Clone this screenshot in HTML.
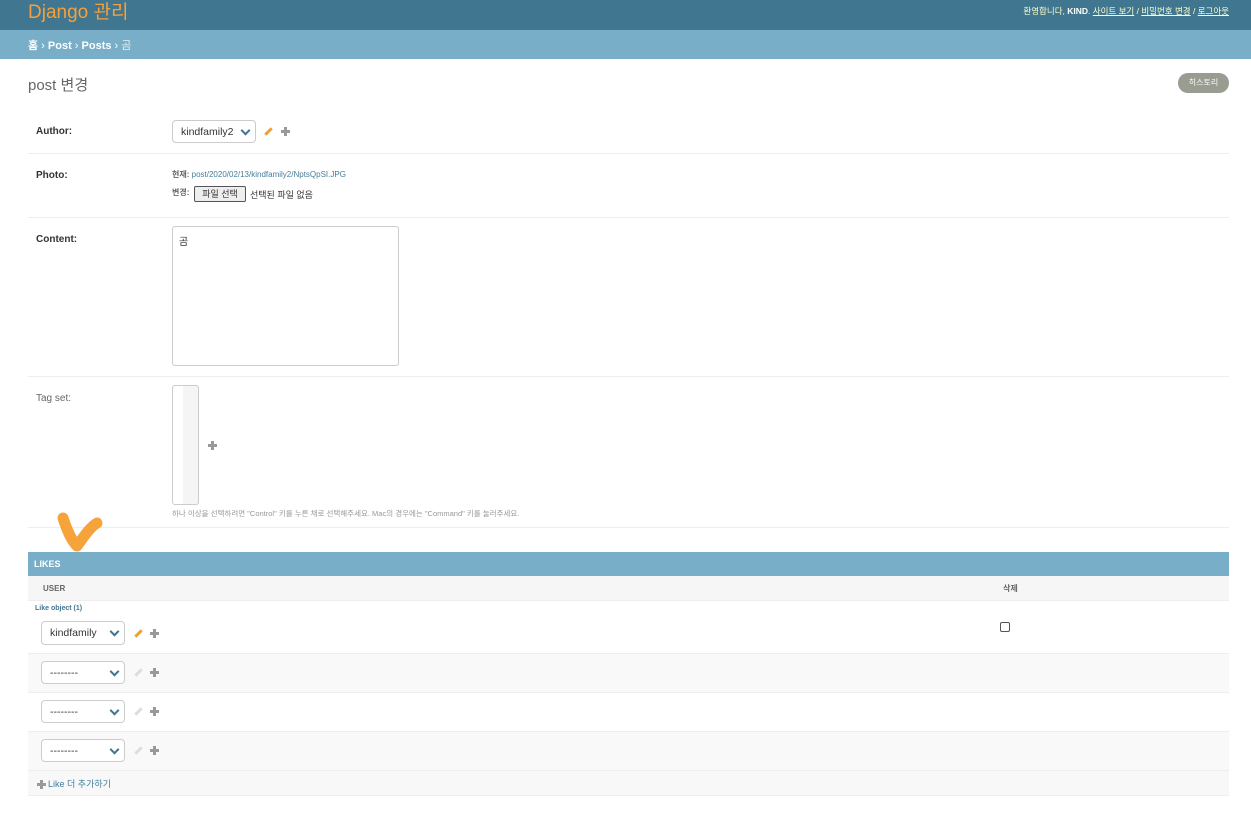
<!DOCTYPE html>
<html><head><meta charset="utf-8"><style>
*{box-sizing:border-box}
body{margin:0;width:1251px;height:820px;background:#fff;font-family:"Liberation Sans","Noto Sans CJK KR",sans-serif;font-size:10px;color:#333;position:relative;overflow:hidden}
.abs{position:absolute}
#hd{left:0;top:0;width:1251px;height:30px;background:#417690}
#bc{left:0;top:30px;width:1251px;height:29px;background:#79aec8;color:#fff;font-size:11px;padding:7px 28px}
.line{position:absolute;left:28px;width:1201px;height:1px;background:#eee}
.lbl{position:absolute;left:36px;font-weight:bold;color:#333;font-size:10px}
.sel{position:absolute;border:1px solid #ccc;border-radius:4px;background:#fff;font-size:10.5px;color:#333;padding-left:8px;display:flex;align-items:center}
.chev{position:absolute;right:6px;top:50%;width:7px;height:7px;border-right:2px solid #417690;border-bottom:2px solid #417690;transform:translateY(-70%) rotate(45deg)}
.plus{position:absolute;width:9px;height:9px}
.plus:before{content:"";position:absolute;left:3px;top:0;width:3px;height:9px;background:#999}
.plus:after{content:"";position:absolute;left:0;top:3px;width:9px;height:3px;background:#999}
.pen{position:absolute;width:9px;height:3px;transform:rotate(-45deg)}
.row{position:absolute;left:28px;width:1201px;border-bottom:1px solid #eee}
</style></head><body>
<div id="hd" class="abs"><span class="abs" style="left:28px;top:-3px;font-size:19px;color:#f5a03a">Django 관리</span>
<span class="abs" style="right:22px;top:5px;font-size:8.5px;color:#ffc">환영합니다, <b style="color:#fff">KIND</b>. <u>사이트 보기</u> / <u>비밀번호 변경</u> / <u>로그아웃</u></span></div>
<div id="bc" class="abs"><b>홈</b> › <b>Post</b> › <b>Posts</b> › <span style="color:#e0eef5">곰</span></div>
<div class="abs" style="left:28px;top:74px;font-size:15px;color:#666">post 변경</div>
<div class="abs" style="left:1178px;top:73px;width:51px;height:20px;border-radius:10px;background:#999c90;color:#fff;font-size:8px;text-align:center;line-height:20px">히스토리</div>

<div class="lbl" style="top:126px">Author:</div>
<div class="sel" style="left:172px;top:120px;width:84px;height:23px">kindfamily2<span class="chev"></span></div>
<div class="pen" style="left:264px;top:130px;background:#f0a030"></div>
<div class="plus" style="left:281px;top:127px"></div>
<div class="line" style="top:153px"></div>

<div class="lbl" style="top:170px">Photo:</div>
<div class="abs" style="left:172px;top:169px;font-size:8px;color:#666"><b>현재:</b> <span style="color:#447e9b">post/2020/02/13/kindfamily2/NptsQpSI.JPG</span></div>
<div class="abs" style="left:172px;top:187px;font-size:8px;color:#666"><b>변경:</b></div>
<div class="abs" style="left:194px;top:186px;width:52px;height:16px;border:1px solid #555;border-radius:2px;background:#eee;font-size:9px;text-align:center;line-height:14px">파일 선택</div>
<div class="abs" style="left:250px;top:188px;font-size:9px">선택된 파일 없음</div>
<div class="line" style="top:217px"></div>

<div class="lbl" style="top:234px">Content:</div>
<div class="abs" style="left:172px;top:226px;width:227px;height:140px;border:1px solid #ccc;border-radius:3px;padding:6px;font-size:10px">곰</div>
<div class="line" style="top:376px"></div>

<div class="abs" style="left:36px;top:393px;color:#666">Tag set:</div>
<div class="abs" style="left:172px;top:385px;width:27px;height:120px;border:1px solid #ccc;border-radius:3px;background:linear-gradient(90deg,#fff 0 10px,#f5f5f5 10px)"></div>
<div class="plus" style="left:208px;top:441px"></div>
<div class="abs" style="left:172px;top:508px;font-size:7.5px;color:#999">하나 이상을 선택하려면 "Control" 키를 누른 채로 선택해주세요. Mac의 경우에는 "Command" 키를 눌러주세요.</div>
<div class="line" style="top:527px"></div>

<svg class="abs" style="left:55px;top:510px" width="55" height="44"><path d="M8 8 C12 20 16 30 22 36 C28 28 34 18 42 13" stroke="#f5a33a" stroke-width="11" fill="none" stroke-linecap="round" stroke-linejoin="round"/></svg>

<div class="abs" style="left:28px;top:552px;width:1201px;height:24px;background:#79aec8;color:#fff;font-weight:bold;font-size:9px;padding:7px 6px">LIKES</div>
<div class="row" style="top:576px;height:25px;background:#f6f6f6"><b class="abs" style="left:15px;top:8px;font-size:8px;color:#666">USER</b><b class="abs" style="left:975px;top:7px;font-size:8px;color:#666">삭제</b></div>
<div class="row" style="top:601px;height:53px"><b class="abs" style="left:7px;top:4px;font-size:7px;color:#417690">Like object (1)</b></div>
<div class="sel" style="left:41px;top:621px;width:84px;height:24px">kindfamily<span class="chev"></span></div>
<div class="pen" style="left:134px;top:632px;background:#f0a030"></div>
<div class="plus" style="left:150px;top:629px"></div>
<div class="abs" style="left:1000px;top:622px;width:10px;height:10px;border:1px solid #555;border-radius:2px"></div>

<div class="row" style="top:654px;height:39px;background:#f9f9f9"></div>
<div class="row" style="top:693px;height:39px;background:#fff"></div>
<div class="row" style="top:732px;height:39px;background:#f9f9f9"></div>
<div class="sel" style="left:41px;top:661px;width:84px;height:23px">--------<span class="chev"></span></div>
<div class="sel" style="left:41px;top:700px;width:84px;height:23px">--------<span class="chev"></span></div>
<div class="sel" style="left:41px;top:739px;width:84px;height:23px">--------<span class="chev"></span></div>
<div class="pen" style="left:134px;top:671px;background:#ddd"></div><div class="plus" style="left:150px;top:668px"></div>
<div class="pen" style="left:134px;top:710px;background:#ddd"></div><div class="plus" style="left:150px;top:707px"></div>
<div class="pen" style="left:134px;top:749px;background:#ddd"></div><div class="plus" style="left:150px;top:746px"></div>
<div class="row" style="top:771px;height:25px;background:#f8f8f8"><div class="plus" style="left:9px;top:9px"></div><span class="abs" style="left:20px;top:6px;font-size:9px;color:#447e9b">Like 더 추가하기</span></div>
</body></html>
